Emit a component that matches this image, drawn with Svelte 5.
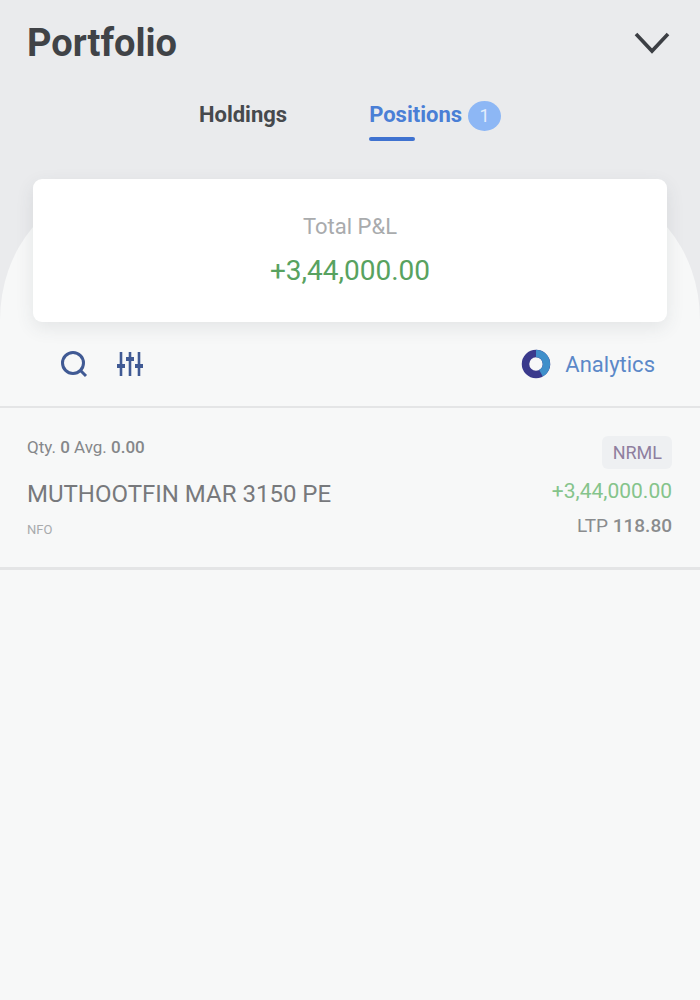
<script>
	let tabs = [
		{ name: 'Holdings', active: false },
		{ name: 'Positions', active: true, count: 1 }
	]
</script>

<div class="page">
	<div class="sheet"></div>

	<header>
		<h1>Portfolio</h1>
		<svg class="chevron" viewBox="0 0 36 24" aria-hidden="true">
			<path d="M2 3 L18 20 L34 3" />
		</svg>
	</header>

	<nav>
		{#each tabs as tab}
			<div class="tab" class:active={tab.active}>
				<span class="label">{tab.name}</span>
				{#if tab.count}
					<span class="count">{tab.count}</span>
				{/if}
			</div>
		{/each}
	</nav>

	<section class="card">
		<div class="card-title">Total P&amp;L</div>
		<div class="card-value">+3,44,000.00</div>
	</section>

	<div class="tools">
		<svg class="search" viewBox="0 0 28 28" aria-hidden="true">
			<circle cx="13" cy="13" r="10.5" />
			<path d="M21 21 L26 26" />
		</svg>
		<svg class="sliders" viewBox="0 0 26 26" aria-hidden="true">
			<path d="M4 1 V25 M13 1 V25 M22 1 V25" />
			<path class="knob" d="M0 15 H8 M9 8 H17 M18 15 H26" />
		</svg>
		<div class="analytics">
			<svg viewBox="0 0 30 30" aria-hidden="true">
				<circle class="ring" cx="15" cy="15" r="10.5" />
				<path class="ring-accent" d="M15 4.5 A10.5 10.5 0 0 1 20 24.2" />
			</svg>
			<span>Analytics</span>
		</div>
	</div>

	<article class="position">
		<div class="left">
			<div class="qty">Qty. <b>0</b> Avg. <b>0.00</b></div>
			<div class="symbol">MUTHOOTFIN MAR 3150 PE</div>
			<div class="exchange">NFO</div>
		</div>
		<div class="right">
			<span class="product">NRML</span>
			<div class="pnl">+3,44,000.00</div>
			<div class="ltp">LTP <b>118.80</b></div>
		</div>
	</article>
</div>

<style>
	:global(body) {
		margin: 0;
		background: #f7f8f8;
	}

	.page {
		position: relative;
		height: 1000px;
		overflow: hidden;
		background: #eaebed;
		font-family: Roboto, 'Liberation Sans', sans-serif;
	}

	.sheet {
		position: absolute;
		left: 0;
		right: 0;
		top: 190px;
		bottom: 0;
		background: #f7f8f8;
		border-radius: 110px 110px 0 0 / 130px 130px 0 0;
	}

	header,
	nav,
	.card,
	.tools,
	.position {
		position: relative;
	}

	header {
		display: flex;
		justify-content: space-between;
		align-items: center;
		padding: 20px 30px 0 27px;
		height: 46px;
	}

	h1 {
		margin: 0;
		font-size: 38px;
		font-weight: 700;
		line-height: 46px;
		color: #404347;
	}

	.chevron {
		width: 36px;
		height: 24px;
	}

	.chevron path {
		fill: none;
		stroke: #3c3f44;
		stroke-width: 3.6;
	}

	nav {
		display: flex;
		justify-content: center;
		gap: 82px;
		margin-top: 34px;
		padding-left: 0;
		height: 46px;
	}

	.tab {
		display: flex;
		align-items: flex-start;
		gap: 6px;
		color: #46494d;
		font-size: 22px;
		font-weight: 700;
		line-height: 30px;
	}

	.label {
		display: block;
		position: relative;
	}

	.active {
		color: #4a7fd6;
	}

	.active .label::after {
		content: '';
		position: absolute;
		left: 0;
		top: 37px;
		width: 46px;
		height: 4px;
		border-radius: 2px;
		background: #3f72d0;
	}

	.count {
		width: 33px;
		height: 30px;
		margin-top: 1px;
		border-radius: 50%;
		background: #8db7f5;
		color: #e4eefc;
		font-size: 18px;
		font-weight: 400;
		line-height: 30px;
		text-align: center;
	}

	.card {
		box-sizing: border-box;
		height: 143px;
		margin: 33px 33px 0;
		padding-top: 33px;
		background: #fff;
		border-radius: 9px;
		box-shadow: 0 6px 18px rgba(60, 65, 75, 0.1);
		text-align: center;
	}

	.card-title {
		font-size: 22px;
		line-height: 30px;
		color: #a9abad;
	}

	.card-value {
		margin-top: 12px;
		font-size: 28px;
		line-height: 34px;
		color: #58a25f;
	}

	.tools {
		display: flex;
		align-items: center;
		height: 84px;
		padding: 0 45px 0 60px;
		border-bottom: 2px solid #e4e5e6;
	}

	.search {
		width: 28px;
		height: 28px;
	}

	.search circle,
	.search path {
		fill: none;
		stroke: #405a94;
		stroke-width: 3;
	}

	.sliders {
		width: 26px;
		height: 26px;
		margin-left: 29px;
	}

	.sliders path {
		fill: none;
		stroke: #405a94;
		stroke-width: 2.6;
	}

	.sliders .knob {
		stroke-width: 4;
	}

	.analytics {
		display: flex;
		align-items: center;
		gap: 14px;
		margin-left: auto;
		font-size: 22px;
		color: #5b88c8;
	}

	.analytics svg {
		width: 30px;
		height: 30px;
	}

	.ring,
	.ring-accent {
		fill: none;
		stroke-width: 7.5;
	}

	.ring {
		stroke: #3a3a8c;
	}

	.ring-accent {
		stroke: #3f8fca;
	}

	.position {
		display: flex;
		justify-content: space-between;
		box-sizing: border-box;
		height: 162px;
		padding: 27px 28px 0 27px;
		border-bottom: 3px solid #e4e5e6;
	}

	.qty {
		font-size: 17px;
		line-height: 24px;
		color: #85878a;
	}

	.qty b,
	.ltp b {
		font-weight: 500;
	}

	.symbol {
		margin-top: 20px;
		font-size: 24px;
		line-height: 30px;
		color: #77797c;
	}

	.exchange {
		margin-top: 12px;
		font-size: 13px;
		line-height: 18px;
		color: #a8aaac;
	}

	.right {
		display: flex;
		flex-direction: column;
		align-items: flex-end;
	}

	.product {
		box-sizing: border-box;
		margin-top: 1px;
		height: 33px;
		padding: 0 10px 0 11px;
		border-radius: 6px;
		background: #eef0f2;
		font-size: 18px;
		line-height: 33px;
		color: #8f7f9f;
	}

	.pnl {
		margin-top: 8px;
		font-size: 21px;
		line-height: 28px;
		color: #85c48b;
	}

	.ltp {
		margin-top: 8px;
		font-size: 19px;
		line-height: 26px;
		color: #8a8c8e;
	}
</style>
